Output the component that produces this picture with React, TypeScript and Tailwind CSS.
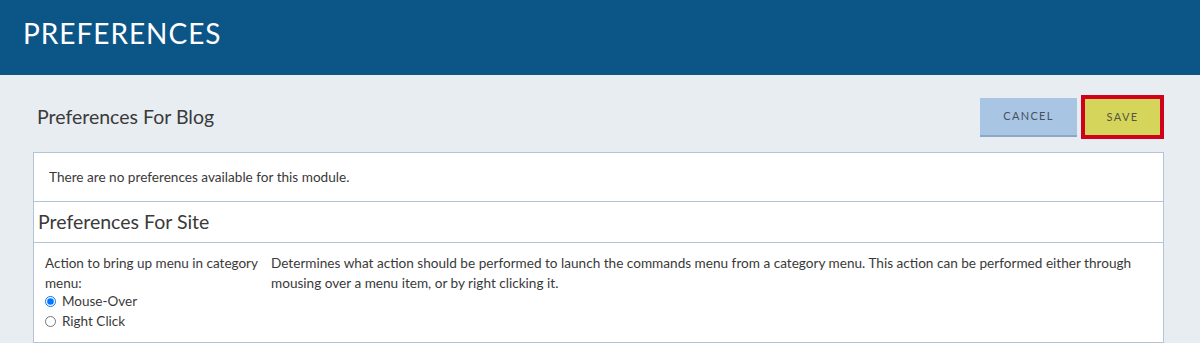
import { useState } from "react";

const font = { fontFamily: "Lato, 'Open Sans', sans-serif" };

export default function App() {
  const [mode, setMode] = useState("mouse");

  return (
    <div className="min-h-[343px] bg-[#e8edf2] text-[#333]" style={font}>
      {/* Page banner */}
      <header className="h-[75px] bg-[#0c5587] px-[23px] pt-[18px]">
        <h1 className="text-[28px] leading-[30px] tracking-[0.035em] text-white">
          PREFERENCES
        </h1>
      </header>

      <main className="pl-[33px] pr-[36px]">
        <div className="flex items-center justify-between pt-[20px] pb-[13px]">
          <h2 className="pl-[4px] text-[19.5px] text-[#3a3a3a]">Preferences For Blog</h2>
          <div className="flex items-center gap-[4px]">
            <button className="h-[39px] w-[97px] border-b-2 border-[#8ca8c6] bg-[#a8c6e4] text-[11px] tracking-[0.12em] text-[#4a5060]">
              CANCEL
            </button>
            <button className="h-[44px] w-[83px] border-4 border-[#d0021b] bg-[#d4d55a] text-[11px] tracking-[0.12em] text-[#555540]">
              SAVE
            </button>
          </div>
        </div>

        <div className="border border-[#b4c3d6] bg-white">
          <div className="flex h-[48px] items-center px-[15px] text-[13.6px] text-[#3a3a3a]">
            There are no preferences available for this module.
          </div>
          <div className="flex h-[41px] items-center border-t border-[#b4c3d6] pl-[4px] text-[19.5px] text-[#3a3a3a]">
            Preferences For Site
          </div>
          <div className="grid h-[100px] grid-cols-[226px_1fr] border-t border-[#b4c3d6] pl-[11px] pr-[28px] pt-[10px] text-[13.5px] leading-[20px] text-[#3a3a3a]">
            <div>
              <p className="mb-[-2px] w-[220px]">Action to bring up menu in category menu:</p>
              <label className="flex items-center gap-[6px] leading-[20px]">
                <input
                  type="radio"
                  name="menu"
                  className="m-0 h-[11px] w-[11px] accent-[#0075ff]"
                  checked={mode === "mouse"}
                  onChange={() => setMode("mouse")}
                />
                Mouse-Over
              </label>
              <label className="flex items-center gap-[6px] leading-[21px]">
                <input
                  type="radio"
                  name="menu"
                  className="m-0 h-[11px] w-[11px] accent-[#0075ff]"
                  checked={mode === "right"}
                  onChange={() => setMode("right")}
                />
                Right Click
              </label>
            </div>
            <p className="text-[13.6px]">
              Determines what action should be performed to launch the commands menu from a
              category menu. This action can be performed either through mousing over a menu
              item, or by right clicking it.
            </p>
          </div>
        </div>
      </main>
    </div>
  );
}
